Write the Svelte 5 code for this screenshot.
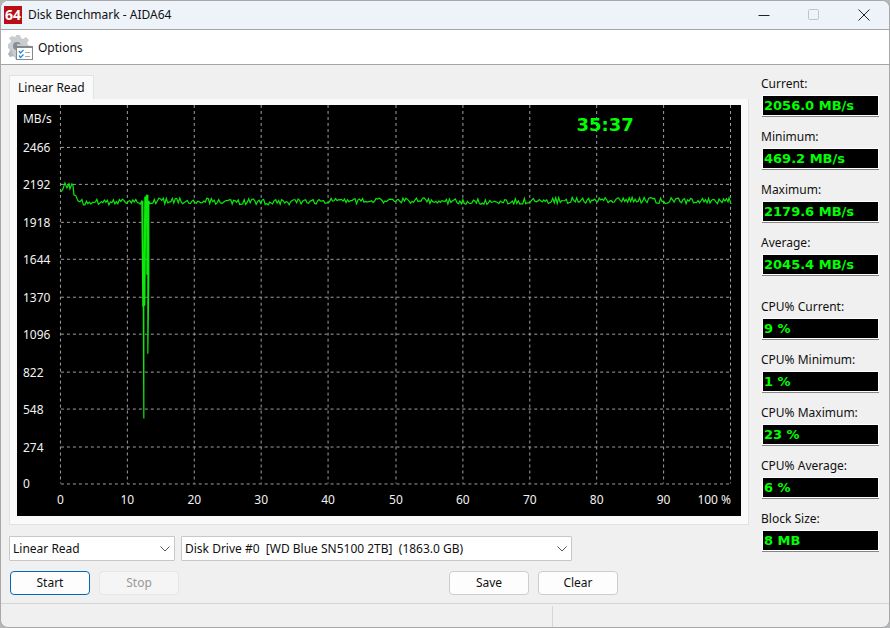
<script lang="ts">
	const stats = [
		{ id: 'current', label: 'Current:', value: '2056.0 MB/s' },
		{ id: 'minimum', label: 'Minimum:', value: '469.2 MB/s' },
		{ id: 'maximum', label: 'Maximum:', value: '2179.6 MB/s' },
		{ id: 'average', label: 'Average:', value: '2045.4 MB/s' }
	];

	const cpuStats = [
		{ id: 'cpu-current', label: 'CPU% Current:', value: '9 %' },
		{ id: 'cpu-minimum', label: 'CPU% Minimum:', value: '1 %' },
		{ id: 'cpu-maximum', label: 'CPU% Maximum:', value: '23 %' },
		{ id: 'cpu-average', label: 'CPU% Average:', value: '6 %' },
		{ id: 'block-size', label: 'Block Size:', value: '8 MB' }
	];

	const speeds = [2466, 2192, 1918, 1644, 1370, 1096, 822, 548, 274, 0];
	const percents = [0, 10, 20, 30, 40, 50, 60, 70, 80, 90, 100];

	// plot area inside the chart
	const left = 44;
	const right = 715;
	const top = 42;
	const bottom = 379;

	const gridX = (p: number) => Math.round(left + ((right - left) * p) / 100) - 0.5;
	const gridY = (s: number) => Math.round(bottom - ((bottom - top) * s) / 2466) + 0.5;

	// small seeded generator, so the trace is the same on every load
	let seed = 37;
	function noise() {
		seed = (seed * 1103515245 + 12345) % 2147483648;
		return seed / 2147483648 - 0.5;
	}

	function steady(from: number, to: number) {
		let points = '';
		for (let x = from; x <= to; x += 1.5) {
			const drift = 97 - ((x - left) / (right - left)) * 1.5 + Math.sin(x / 34) * 0.7;
			points += `${x},${(drift + noise() * 6).toFixed(1)} `;
		}
		return points;
	}

	const trace =
		'44,87 46,84 48,78 50,83 52,79 53,84 55,79 56,80 57,90 59,91 61,96 63,97 ' +
		steady(65, 125) +
		'126,202 126,96 127,314 127,202 128,92 128,201 129,92 130,90 130,170 ' +
		'131,90 131,249 132,174 132,96 ' +
		steady(133, 712) +
		'713,93 715,99';

	let mode = $state('Linear Read');
	let drive = $state('0');
</script>

{#snippet readout(item: { id: string; label: string; value: string })}
	<div class="readout">
		<label for={item.id}>{item.label}</label>
		<output id={item.id}>{item.value}</output>
	</div>
{/snippet}

{#snippet chevron()}
	<svg class="chevron" width="10" height="6" viewBox="0 0 10 6" aria-hidden="true">
		<path d="M.5 .5 5 5 9.5 .5" fill="none" stroke="#555" />
	</svg>
{/snippet}

<div class="window">
	<header class="titlebar">
		<span class="logo">64</span>
		<h1>Disk Benchmark - AIDA64</h1>
		<div class="window-buttons">
			<button aria-label="Minimize">
				<svg width="12" height="12" viewBox="0 0 12 12"><path d="M.5 6.5h11" /></svg>
			</button>
			<button aria-label="Maximize" disabled>
				<svg width="12" height="12" viewBox="0 0 12 12"><rect x=".5" y=".5" width="10" height="10" rx="1" /></svg>
			</button>
			<button aria-label="Close">
				<svg width="12" height="12" viewBox="0 0 12 12"><path d="m.5 .5 11 11m0-11-11 11" /></svg>
			</button>
		</div>
	</header>

	<nav class="menu">
		<button>
			<svg width="26" height="26" viewBox="0 0 26 26" aria-hidden="true">
				<path
					d="M8 0h4l1 3 2 1 3-2 3 3-2 3 1 2 3 1v4l-3 1-1 2 2 3-3 2-3-1-2 1-1 2H8l-1-3-2-1-3 1-2-3 2-3-1-2-1-1V9l2-1 1-2-2-3 3-2 3 1 1-1z"
					fill="#c9cdd0"
				/>
				<path d="M3 15l2 5 3 2 2 3H8l-1-3-2-1-3 1-2-3 2-3z" fill="#b2b7bb" />
				<circle cx="9" cy="11" r="4" fill="#878d92" />
				<path d="M9 9h5v3H9z" fill="#c3c7ca" />
				<rect x="8.5" y="11.5" width="16" height="13" fill="#fff" stroke="#85898d" />
				<path d="M8 12h17" stroke="#85898d" stroke-width="2" />
				<path d="m11 16 1.5 2 3-3m-4.500 5.500 1.500 2 3-3" fill="none" stroke="#258be0" stroke-width="1.300" />
				<path d="M17 17.500h5m-5 4h5" stroke="#aaa" />
			</svg>
			Options
		</button>
	</nav>

	<main>
		<div class="work">
			<div class="tabs" role="tablist">
				<button role="tab" aria-selected="true">Linear Read</button>
			</div>
			<section class="panel">
				<svg class="chart" viewBox="0 0 725 412" role="img" aria-label="Linear Read">
					<g class="grid">
						{#each speeds as s}
							<line x1={left} x2={right} y1={gridY(s)} y2={gridY(s)} />
						{/each}
						{#each percents as p}
							<line x1={gridX(p)} x2={gridX(p)} y1="0" y2={bottom} />
						{/each}
					</g>
					<polyline points={trace} />
					<g class="scale">
						<text x="6" y="18">MB/s</text>
						{#each speeds as s}
							<text x="6" y={gridY(s) + 4.5}>{s}</text>
						{/each}
						{#each percents.slice(0, -1) as p}
							<text x={gridX(p)} y="400" text-anchor="middle">{p}</text>
						{/each}
						<text x="715" y="400" text-anchor="end">100 %</text>
					</g>
					<text class="timer" x="589" y="26" text-anchor="middle">35:37</text>
				</svg>
			</section>

			<div class="selectors">
				<div class="select mode">
					<select aria-label="Test" bind:value={mode}>
						<option>Linear Read</option>
					</select>
					{@render chevron()}
				</div>
				<div class="select drive">
					<select aria-label="Drive" bind:value={drive}>
						<option value="0">Disk Drive #0&nbsp; [WD Blue SN5100 2TB]&nbsp; (1863.0 GB)</option>
					</select>
					{@render chevron()}
				</div>
			</div>

			<div class="actions">
				<button class="primary">Start</button>
				<button disabled>Stop</button>
				<span class="spacer"></span>
				<button>Save</button>
				<button>Clear</button>
			</div>
		</div>

		<aside>
			<div class="group">
				{#each stats as item}
					{@render readout(item)}
				{/each}
			</div>
			<div class="group">
				{#each cpuStats as item}
					{@render readout(item)}
				{/each}
			</div>
		</aside>
	</main>

	<footer>
		<span></span>
		<span></span>
	</footer>
</div>

<style>
	:global(body) {
		margin: 0;
		background: #b4b6b8;
	}

	.window {
		box-sizing: border-box;
		min-height: 100vh;
		display: flex;
		flex-direction: column;
		border: 1px solid #a8a8a8;
		border-radius: 8px;
		background: #f0f0f0;
		color: #111;
		font: 12px/16px "Noto Sans", "Open Sans", sans-serif;
		overflow: hidden;
	}

	button,
	select {
		font: inherit;
		color: inherit;
	}

	.titlebar {
		display: flex;
		align-items: center;
		height: 28px;
		padding-left: 3px;
		background: #edf3f9;
		border-bottom: 1px solid #a5a5a5;
	}

	.logo {
		width: 18px;
		height: 18px;
		background: #b80f17;
		color: #fff;
		font: bold 14px/18px "Open Sans", sans-serif;
		text-align: center;
	}

	h1 {
		margin: 0 0 0 6px;
		font: inherit;
	}

	.window-buttons {
		display: flex;
		margin-left: auto;
	}

	.window-buttons button {
		display: grid;
		place-items: center;
		width: 50px;
		height: 28px;
		padding: 0;
		border: 0;
		background: none;
	}

	.window-buttons svg {
		fill: none;
		stroke: #222;
	}

	.window-buttons button:disabled svg {
		stroke: #c0c5c9;
	}

	.menu {
		display: flex;
		height: 34px;
		background: #fff;
		border-bottom: 1px solid #a5a5a5;
	}

	.menu button {
		display: flex;
		align-items: center;
		gap: 4px;
		padding: 2px 7px 0;
		border: 0;
		background: none;
	}

	main {
		display: flex;
		flex: 1;
		gap: 12px;
		padding: 10px 10px 7px 8px;
	}

	.work {
		flex: 1;
		min-width: 0;
	}

	.tabs button {
		display: block;
		height: 24px;
		padding: 0 8px;
		border: 1px solid #e2e2e2;
		border-bottom: 0;
		background: #fafafa;
	}

	.panel {
		padding: 6px 7px 8px;
		border: 1px solid #e2e2e2;
		border-top: 0;
		background: #fafafa;
	}

	.chart {
		display: block;
		width: 100%;
		background: #000;
	}

	.grid line {
		stroke: #a0a0a0;
		stroke-dasharray: 3 3;
	}

	polyline {
		fill: none;
		stroke: #0ce80c;
		stroke-width: 1.2;
	}

	.scale {
		fill: #f2f2f2;
	}

	.timer {
		fill: #0f0;
		font: bold 18px "DejaVu Sans", sans-serif;
	}

	.selectors {
		display: flex;
		gap: 6px;
		margin-top: 11px;
	}

	.select {
		position: relative;
	}

	.mode {
		flex: 0 0 166px;
	}

	.drive {
		flex: 0 1 391px;
	}

	select {
		appearance: none;
		display: block;
		width: 100%;
		height: 25px;
		padding: 0 24px 0 3px;
		border: 1px solid #c8c8c8;
		border-radius: 1px;
		background: #fff;
	}

	.chevron {
		position: absolute;
		right: 5px;
		top: 10px;
		pointer-events: none;
	}

	.actions {
		display: flex;
		gap: 9px;
		margin-top: 10px;
		padding: 0 131px 0 1px;
	}

	.actions button {
		width: 80px;
		height: 24px;
		padding: 0;
		border: 1px solid #cdcdcd;
		border-radius: 4px;
		background: #fdfdfd;
	}

	.actions .primary {
		border-color: #0067c0;
	}

	.actions button:disabled {
		border-color: #e6e6e6;
		background: #f5f5f5;
		color: #999;
	}

	.spacer {
		flex: 1;
	}

	aside {
		flex: 0 0 118px;
		padding-top: 1px;
	}

	.group + .group {
		margin-top: 11px;
	}

	.readout {
		display: flex;
		flex-direction: column;
		gap: 3px;
		height: 53px;
	}

	output {
		height: 19px;
		margin-left: 1px;
		padding-left: 1px;
		border: 1px solid #fff;
		background: #000;
		box-shadow: 0 1px #858585;
		color: #0f0;
		font: bold 13px/19px "DejaVu Sans", sans-serif;
	}

	footer {
		display: grid;
		grid-template-columns: 62% 38%;
		height: 23px;
		border-top: 1px solid #d5d5d5;
	}

	footer span + span {
		margin-top: 2px;
		border-left: 1px solid #d5d5d5;
	}
</style>
